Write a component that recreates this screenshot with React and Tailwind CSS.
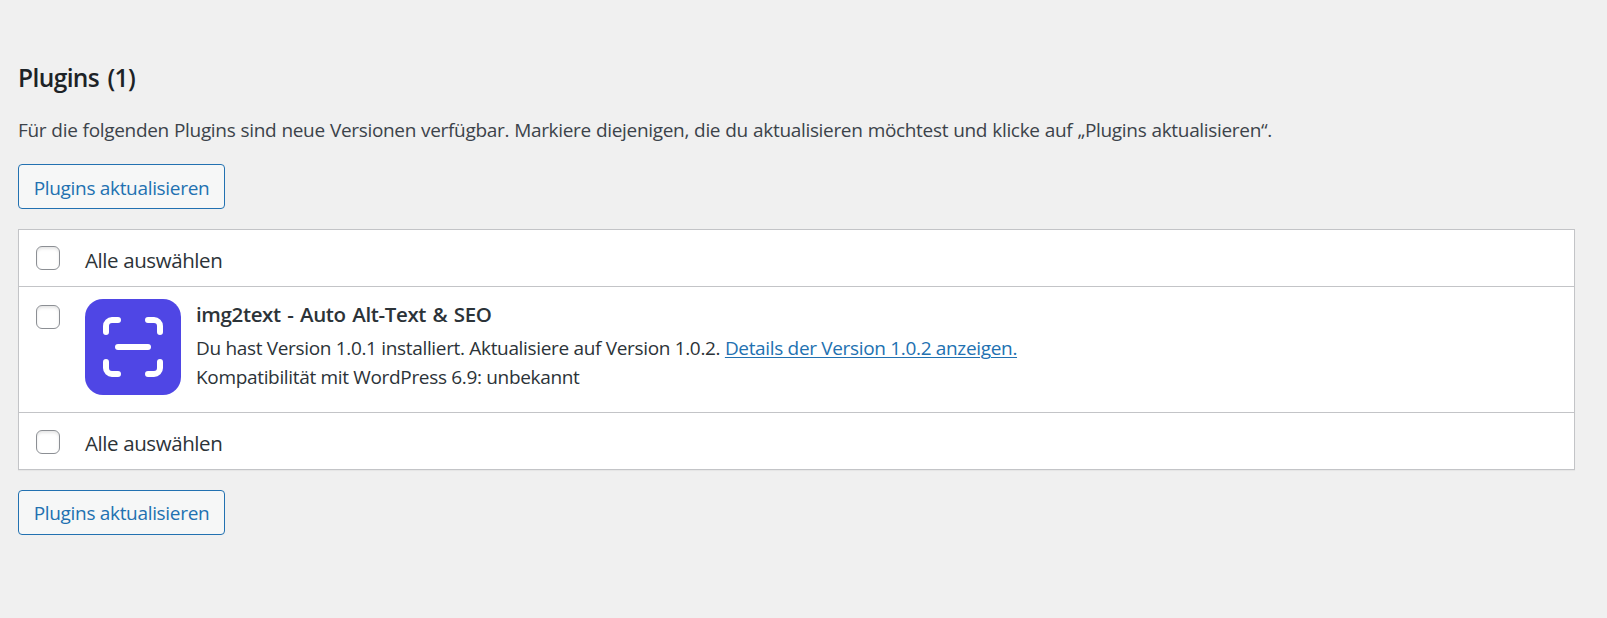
import { ScanLine } from "lucide-react";

function UpdateButton({ className }) {
  return (
    <button className={`block w-[207px] h-[45px] rounded-[4px] border border-[#2271b1] bg-[#f6f7f7] text-[#2271b1] text-[19px] whitespace-nowrap tracking-[-0.32px] ${className}`}>
      Plugins aktualisieren
    </button>
  );
}

function Checkbox({ className }) {
  return (
    <input
      type="checkbox"
      className={`appearance-none block shrink-0 w-6 h-6 rounded-[6px] border border-[#8c8f94] bg-white shadow-[inset_0_2px_3px_rgba(0,0,0,0.1)] ${className}`}
    />
  );
}

export default function App() {
  const plugins = [
    {
      name: "img2text - Auto Alt-Text & SEO",
      info: "Du hast Version 1.0.1 installiert. Aktualisiere auf Version 1.0.2.",
      link: "Details der Version 1.0.2 anzeigen.",
      compat: "Kompatibilität mit WordPress 6.9: unbekannt",
    },
  ];

  return (
    <div className="h-[618px] bg-[#f0f0f0] pt-[60px] pl-[18px] pr-8 overflow-hidden font-['Open_Sans','Noto_Sans',sans-serif]">
      <h2 className="text-[24.5px] leading-9 font-semibold text-[#1d2327] tracking-[-0.6px] [word-spacing:2.5px] whitespace-nowrap">
        Plugins (1)
      </h2>
      <p className="my-[19px] text-[19px] leading-[30px] text-[#3c434a] tracking-[-0.325px] [word-spacing:0.5px] whitespace-nowrap">
        Für die folgenden Plugins sind neue Versionen verfügbar. Markiere diejenigen, die du aktualisieren möchtest und klicke auf „Plugins aktualisieren“.
      </p>

      <UpdateButton className="pt-[3px]" />

      <div className="my-5 border border-[#c3c4c7] bg-white shadow-[0_1px_1px_rgba(0,0,0,0.04)] divide-y divide-[#c3c4c7] text-[#2c3338]">
        <div className="flex h-[57px] pl-[17px]">
          <Checkbox className="mt-4" />
          <label className="ml-[25px] mt-[14px] text-[20.5px] leading-8 tracking-[-0.4px]">Alle auswählen</label>
        </div>

        {plugins.map((plugin) => (
          <div key={plugin.name} className="flex h-[126px] pl-[17px] pt-3">
            <Checkbox className="mt-[6px]" />
            <div className="ml-[25px] w-24 h-24 rounded-[18px] bg-[#4f46e5] flex items-center justify-center shrink-0">
              <ScanLine className="w-[72px] h-[72px] text-white" strokeWidth={2} />
            </div>
            <div className="ml-[15px] pt-px text-[19px] leading-[29px] tracking-[-0.33px] whitespace-nowrap">
              <h3 className="mb-1.5 text-[20.5px] leading-7 font-semibold tracking-[-0.36px] [word-spacing:1.5px]">{plugin.name}</h3>
              <p>
                {plugin.info}{" "}
                <a href="#" className="text-[#2271b1] underline decoration-1 underline-offset-2">{plugin.link}</a>
              </p>
              <p>{plugin.compat}</p>
            </div>
          </div>
        ))}

        <div className="flex h-[56px] pl-[17px]">
          <Checkbox className="mt-[17px]" />
          <label className="ml-[25px] mt-[14px] text-[20.5px] leading-8 tracking-[-0.4px]">Alle auswählen</label>
        </div>
      </div>

      <UpdateButton className="pt-px" />
    </div>
  );
}
